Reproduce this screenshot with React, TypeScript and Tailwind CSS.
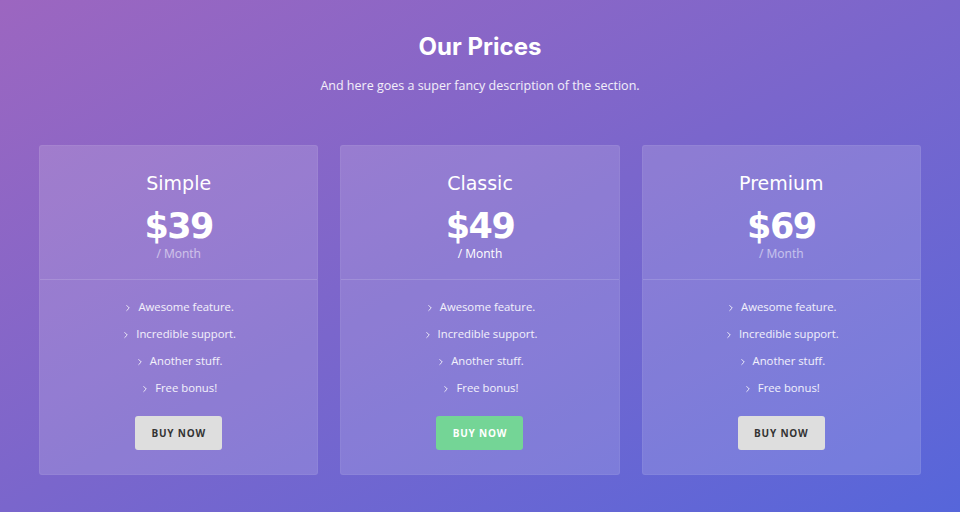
import { ChevronRight } from 'lucide-react';

type Plan = {
  name: string;
  price: string;
  featured?: boolean;
};

const PLANS: Plan[] = [
  { name: 'Simple', price: '$39' },
  { name: 'Classic', price: '$49', featured: true },
  { name: 'Premium', price: '$69' },
];

const FEATURES = ['Awesome feature.', 'Incredible support.', 'Another stuff.', 'Free bonus!'];

const HEADING = { fontFamily: '"DejaVu Sans", "Liberation Sans", sans-serif' };

function PriceCard({ plan }: { plan: Plan }) {
  return (
    <div className="flex h-[330px] flex-col rounded-[3px] border border-white/5 bg-white/15">
      <div className="flex h-[134px] flex-col items-center border-b border-white/15 pt-[25px]">
        <h3 className="text-[19px] leading-[24px] font-normal text-white" style={HEADING}>
          {plan.name}
        </h3>
        <p className="mt-[12px] text-[35px] leading-[38px] font-bold tracking-[-1.5px] text-white" style={HEADING}>
          {plan.price}
        </p>
        <p
          className={
            plan.featured
              ? 'mt-[2px] text-[12px] leading-[14px] text-white'
              : 'mt-[2px] text-[12px] leading-[14px] text-white/55'
          }
        >
          / Month
        </p>
      </div>
      <ul className="flex flex-col items-center pt-[14px]">
        {FEATURES.map((f) => (
          <li key={f} className="flex h-[27px] items-center gap-[5px] text-[11.3px] text-white/90">
            <ChevronRight size={10} strokeWidth={2.2} />
            {f}
          </li>
        ))}
      </ul>
      <div className="mt-[14px] flex justify-center">
        <button
          className={
            plan.featured
              ? 'h-[34px] w-[87px] rounded-[3px] bg-[#74d596] text-[10px] font-bold tracking-[0.8px] text-white'
              : 'h-[34px] w-[87px] rounded-[3px] bg-[#dedede] text-[10px] font-bold tracking-[0.8px] text-[#333]'
          }
        >
          BUY NOW
        </button>
      </div>
    </div>
  );
}

export default function App() {
  return (
    <div
      className="h-[512px] w-[960px] bg-gradient-to-br from-[#9c66c0] via-[#7a66cc] to-[#5666da] px-[39px] pt-[32px]"
      style={{ fontFamily: '"Open Sans", "Liberation Sans", sans-serif' }}
    >
      <h1
        className="text-center text-[24px] leading-[30px] font-bold text-white"
        style={{ fontFamily: 'Inter, "DejaVu Sans", sans-serif' }}
      >
        Our Prices
      </h1>
      <p className="mt-[15px] text-center text-[12.5px] leading-[18px] text-white/90">
        And here goes a super fancy description of the section.
      </p>
      <div className="mt-[50px] grid grid-cols-3 gap-[22px]">
        {PLANS.map((p) => (
          <PriceCard key={p.name} plan={p} />
        ))}
      </div>
    </div>
  );
}
